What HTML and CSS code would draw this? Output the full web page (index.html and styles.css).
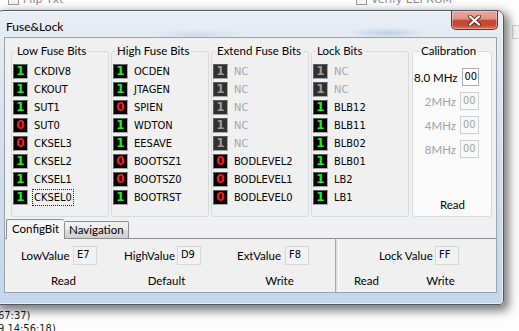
FILE: index.html
```html
<!DOCTYPE html>
<html lang="en">
<head>
    <meta charset="UTF-8">
    <title>Fuse&amp;Lock</title>
    <link rel="stylesheet" href="styles.css">
</head>
<body>
    <div class="desktop">
        <!-- bits of the windows behind the dialog -->
        <div class="behind behind-left"><span class="behind-check"></span>Flip Txt</div>
        <div class="behind behind-right"><span class="behind-check"></span>Verify EEPROM</div>
        <div class="behind-box"></div>
        <div class="log">
            <div>67:37)</div>
            <div>9 14:56:18)</div>
        </div>

        <div class="window">
            <div class="titlebar">
                <span class="title">Fuse&amp;Lock</span>
                <button class="close" title="Close">
                    <svg width="13" height="11" viewBox="0 0 13 11">
                        <path d="M2 1.5 L11 9.5 M11 1.5 L2 9.5" stroke="#5a2a22" stroke-width="4" stroke-linecap="round"/>
                        <path d="M2 1.5 L11 9.5 M11 1.5 L2 9.5" stroke="#fff" stroke-width="2.2" stroke-linecap="round"/>
                    </svg>
                </button>
            </div>

            <div class="client">
                <div class="bits-panel">
                    <fieldset class="group">
                        <legend>Low Fuse Bits</legend>
                        <ul class="bits">
                            <li><span class="led on">1</span><span class="bit">CKDIV8</span></li>
                            <li><span class="led on">1</span><span class="bit">CKOUT</span></li>
                            <li><span class="led on">1</span><span class="bit">SUT1</span></li>
                            <li><span class="led off">0</span><span class="bit">SUT0</span></li>
                            <li><span class="led off">0</span><span class="bit">CKSEL3</span></li>
                            <li><span class="led on">1</span><span class="bit">CKSEL2</span></li>
                            <li><span class="led on">1</span><span class="bit">CKSEL1</span></li>
                            <li><span class="led on">1</span><span class="bit focus">CKSEL0</span></li>
                        </ul>
                    </fieldset>

                    <fieldset class="group">
                        <legend>High Fuse Bits</legend>
                        <ul class="bits">
                            <li><span class="led on">1</span><span class="bit">OCDEN</span></li>
                            <li><span class="led on">1</span><span class="bit">JTAGEN</span></li>
                            <li><span class="led off">0</span><span class="bit">SPIEN</span></li>
                            <li><span class="led on">1</span><span class="bit">WDTON</span></li>
                            <li><span class="led on">1</span><span class="bit">EESAVE</span></li>
                            <li><span class="led off">0</span><span class="bit">BOOTSZ1</span></li>
                            <li><span class="led off">0</span><span class="bit">BOOTSZ0</span></li>
                            <li><span class="led on">1</span><span class="bit">BOOTRST</span></li>
                        </ul>
                    </fieldset>

                    <fieldset class="group">
                        <legend>Extend Fuse Bits</legend>
                        <ul class="bits">
                            <li><span class="led nc">1</span><span class="bit dim">NC</span></li>
                            <li><span class="led nc">1</span><span class="bit dim">NC</span></li>
                            <li><span class="led nc">1</span><span class="bit dim">NC</span></li>
                            <li><span class="led nc">1</span><span class="bit dim">NC</span></li>
                            <li><span class="led nc">1</span><span class="bit dim">NC</span></li>
                            <li><span class="led off">0</span><span class="bit">BODLEVEL2</span></li>
                            <li><span class="led off">0</span><span class="bit">BODLEVEL1</span></li>
                            <li><span class="led off">0</span><span class="bit">BODLEVEL0</span></li>
                        </ul>
                    </fieldset>

                    <fieldset class="group">
                        <legend>Lock Bits</legend>
                        <ul class="bits">
                            <li><span class="led nc">1</span><span class="bit dim">NC</span></li>
                            <li><span class="led nc">1</span><span class="bit dim">NC</span></li>
                            <li><span class="led on">1</span><span class="bit">BLB12</span></li>
                            <li><span class="led on">1</span><span class="bit">BLB11</span></li>
                            <li><span class="led on">1</span><span class="bit">BLB02</span></li>
                            <li><span class="led on">1</span><span class="bit">BLB01</span></li>
                            <li><span class="led on">1</span><span class="bit">LB2</span></li>
                            <li><span class="led on">1</span><span class="bit">LB1</span></li>
                        </ul>
                    </fieldset>

                    <fieldset class="group calib">
                        <legend>Calibration</legend>
                        <div class="calib-rows">
                            <div class="calib-row"><span class="calib-label">8.0 MHz</span><span class="calib-box">00</span></div>
                            <div class="calib-row dim"><span class="calib-label">2MHz</span><span class="calib-box">00</span></div>
                            <div class="calib-row dim"><span class="calib-label">4MHz</span><span class="calib-box">00</span></div>
                            <div class="calib-row dim"><span class="calib-label">8MHz</span><span class="calib-box">00</span></div>
                        </div>
                        <div class="calib-read">Read</div>
                    </fieldset>
                </div>

                <div class="tabs">
                    <span class="tab active">ConfigBit</span>
                    <span class="tab">Navigation</span>
                </div>

                <div class="tab-page">
                    <div class="fuse-values">
                        <div class="field"><span class="field-label low">LowValue</span><span class="value-box">E7</span></div>
                        <div class="field"><span class="field-label high">HighValue</span><span class="value-box">D9</span></div>
                        <div class="field"><span class="field-label ext">ExtValue</span><span class="value-box">F8</span></div>
                        <div class="action">Read</div>
                        <div class="action">Default</div>
                        <div class="action">Write</div>
                    </div>
                    <div class="sep"></div>
                    <div class="lock-values">
                        <div class="field"><span class="field-label lock">Lock Value</span><span class="value-box">FF</span></div>
                        <div class="lock-actions">
                            <span class="action">Read</span>
                            <span class="action">Write</span>
                        </div>
                    </div>
                </div>
            </div>
        </div>
    </div>
</body>
</html>
```

FILE: styles.css
```css
body {
    margin: 0;
    font-family: Lato, 'Open Sans', sans-serif;
    font-size: 11px;
    color: #000;
    background: #fff;
    white-space: nowrap;
}

.desktop {
    position: relative;
    width: 519px;
    height: 331px;
    overflow: hidden;
    background: #fdfdfd;
}

/* stuff peeking out from behind the dialog */
.behind {
    position: absolute;
    top: -7px;
    font-family: 'DejaVu Sans', sans-serif;
    font-size: 11px;
    color: #8c8c8c;
    display: flex;
    align-items: center;
    gap: 4px;
}

.behind-left {
    left: 8px;
}

.behind-right {
    left: 356px;
}

.behind-check {
    width: 9px;
    height: 9px;
    border: 1px solid #9a9a9a;
    background: #f4f4f4;
}

.behind-box {
    position: absolute;
    left: 512px;
    top: 25px;
    width: 20px;
    height: 12px;
    border: 1px solid #d4d4d4;
    background: #f7f7f7;
}

.log {
    position: absolute;
    left: -2px;
    top: 309px;
    font-family: 'DejaVu Sans Condensed', 'DejaVu Sans', sans-serif;
    font-stretch: condensed;
    font-size: 11px;
    line-height: 13px;
    color: #1a1a1a;
}

/* the dialog window */
.window {
    position: absolute;
    left: -4px;
    top: 10px;
    width: 508px;
    height: 295px;
    box-sizing: border-box;
    display: flex;
    flex-direction: column;
    padding: 0 6px 11px 7px;
    border: 1px solid #4f5964;
    border-radius: 7px 7px 4px 4px;
    background:
        radial-gradient(ellipse 40px 6px at 390px 22px, rgba(120, 160, 210, 0.35), transparent),
        radial-gradient(ellipse 50px 6px at 200px 24px, rgba(140, 170, 210, 0.25), transparent),
        linear-gradient(180deg, #e9eef4 0, #e3eaf2 12%, #cfdcea 60%, #c3d7ee 100%);
    box-shadow: 3px 4px 10px 2px rgba(0, 0, 0, 0.5), inset 0 0 0 1px rgba(255, 255, 255, 0.6);
}

.titlebar {
    height: 26px;
    display: flex;
    justify-content: space-between;
    align-items: flex-start;
    flex-shrink: 0;
}

.title {
    padding: 8px 0 0 2px;
    line-height: 16px;
    font-size: 12px;
    color: #000;
}

.close {
    width: 47px;
    height: 19px;
    margin-right: -1px;
    padding: 0;
    display: flex;
    align-items: center;
    justify-content: center;
    border: 1px solid #6e2e24;
    border-top: none;
    border-radius: 0 0 5px 5px;
    background: linear-gradient(180deg, #e9aa9c 0, #de9383 45%, #c8472f 52%, #c44a33 78%, #dc7259 100%);
    box-shadow: inset 0 0 0 1px rgba(255, 220, 210, 0.45);
}

.client {
    flex: 1;
    display: flex;
    flex-direction: column;
    border: 1px solid #98a3ae;
    background: #f0f0f0;
}

/* fuse bit groups */
.bits-panel {
    height: 174px;
    display: flex;
    gap: 2px;
    padding: 5px 0 0 6px;
    flex-shrink: 0;
}

.group {
    width: 98px;
    box-sizing: border-box;
    margin: 0;
    padding: 3px 0 0 1px;
    border: 1px solid #d5dadf;
    border-radius: 3px;
    min-width: 0;
}

.group legend {
    margin-left: 2px;
    padding: 0 2px;
    line-height: 16px;
    font-size: 11.5px;
}

.bits {
    list-style: none;
    margin: 0;
    padding: 0;
}

.bits li {
    height: 18px;
    display: flex;
    align-items: center;
}

.led {
    width: 15px;
    height: 15px;
    box-sizing: border-box;
    border: 1px solid;
    border-color: #5e5e5e #a8a8a8 #a8a8a8 #5e5e5e;
    background: #000;
    font-family: 'DejaVu Sans', sans-serif;
    font-weight: bold;
    font-size: 12px;
    line-height: 13px;
    text-align: center;
}

.led.on {
    color: #1ef01e;
}

.led.off {
    color: #ff1c1c;
}

.led.nc {
    background: #303030;
    color: #9a9a9a;
}

.bit {
    margin-left: 6px;
    font-family: 'DejaVu Sans Condensed', 'DejaVu Sans', sans-serif;
    font-stretch: condensed;
    font-size: 11px;
    line-height: 13px;
}

.bit.dim {
    color: #a3a3a3;
}

.bit.focus {
    margin-left: 4px;
    padding: 1px;
    border: 1px dotted #222;
}

/* calibration */
.group.calib {
    width: 80px;
    margin-left: 1px;
    padding: 3px 12px 0 1px;
    background: #fafafa;
}

.calib legend {
    margin-left: 5px;
}

.calib-rows {
    margin-top: 6px;
    display: flex;
    flex-direction: column;
    gap: 6px;
}

.calib-row {
    height: 18px;
    display: flex;
    justify-content: flex-end;
    align-items: center;
    gap: 4px;
}

.calib-label {
    font-size: 11.5px;
}

.calib-box {
    width: 19px;
    height: 18px;
    box-sizing: border-box;
    border: 1px solid #abadb3;
    background: #fff;
    padding-left: 2px;
    font-family: 'DejaVu Sans Condensed', 'DejaVu Sans', sans-serif;
    font-stretch: condensed;
    font-size: 11px;
    line-height: 15px;
}

.calib-row.dim {
    color: #a3a3a3;
}

.calib-row.dim .calib-box {
    border-color: #cfcfcf;
    background: #f8f8f8;
}

.calib-read {
    margin-top: 39px;
    padding-left: 12px;
    text-align: center;
    line-height: 16px;
    font-size: 11.5px;
}

/* tabs */
.tabs {
    height: 21px;
    display: flex;
    align-items: flex-end;
    padding-left: 1px;
    flex-shrink: 0;
}

.tab {
    height: 16px;
    padding: 0 4px;
    border: 1px solid #8c8e94;
    border-bottom: none;
    background: linear-gradient(180deg, #f2f2f2 0, #ebebeb 50%, #dddddd 51%, #cfcfcf 100%);
    line-height: 15px;
    font-size: 11.5px;
    border-radius: 2px 2px 0 0;
}

.tab.active {
    height: 19px;
    margin-bottom: -1px;
    padding: 0 5px;
    position: relative;
    background: #f4f4f4;
    border-right: none;
    line-height: 18px;
}

.tab-page {
    flex: 1;
    display: flex;
    border-top: 1px solid #8c8e94;
    background: #f0f0f0;
    font-size: 11.5px;
}

.fuse-values {
    width: 313px;
    padding: 7px 0 0 16px;
    display: grid;
    grid-template-columns: 103px 113px auto;
    grid-template-rows: 19px 16px;
    row-gap: 8px;
}

.field {
    display: flex;
    align-items: center;
}

.field-label {
    flex-shrink: 0;
    line-height: 16px;
}

.field-label.low {
    width: 52px;
}

.field-label.high {
    width: 53px;
}

.field-label.ext {
    width: 48px;
}

.field-label.lock {
    width: 56px;
}

.value-box {
    width: 24px;
    height: 19px;
    box-sizing: border-box;
    padding: 1px 0 0 3px;
    border: 1px solid #d6d6d6;
    background: #f2f2f2;
    font-family: 'DejaVu Sans Condensed', 'DejaVu Sans', sans-serif;
    font-stretch: condensed;
    font-size: 11px;
    line-height: 13px;
}

.action {
    width: 85px;
    text-align: center;
    line-height: 16px;
}

.sep {
    width: 2px;
    margin-left: 1px;
    border-left: 1px solid #a7a7a7;
    border-right: 1px solid #fff;
    background: #e2e2e2;
}

.lock-values {
    padding: 7px 0 0 40px;
    display: flex;
    flex-direction: column;
    gap: 8px;
}

.lock-values .field {
    height: 19px;
}

.lock-actions {
    margin-left: -40px;
    display: grid;
    grid-template-columns: 55px 55px;
    column-gap: 19px;
}

.lock-actions .action {
    width: auto;
}
```
